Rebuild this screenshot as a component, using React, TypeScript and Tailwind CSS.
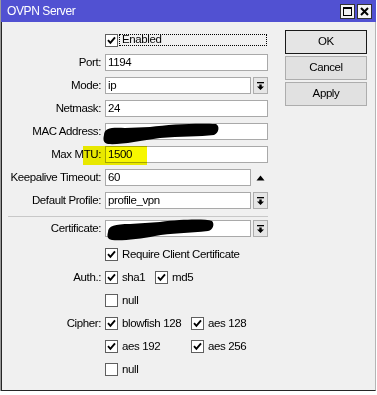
import React from "react";

const font = { fontFamily: "'Liberation Sans', Arial, sans-serif", letterSpacing: "-0.4px" };

function Check() {
  return (
    <svg width="9" height="9" viewBox="0 0 9 9">
      <path d="M1 4.2 L3.4 6.8 L8 1.4" fill="none" stroke="#000" strokeWidth="1.9" />
    </svg>
  );
}

function Checkbox({ checked }: { checked: boolean }) {
  return (
    <div className="w-[13px] h-[13px] border border-[#5f5f5f] bg-white flex items-center justify-center shrink-0">
      {checked && <Check />}
    </div>
  );
}

function CheckItem({ checked, label, w }: { checked: boolean; label: string; w?: string }) {
  return (
    <div className={"flex items-center gap-[4px] " + (w ?? "")}>
      <Checkbox checked={checked} />
      <span className="text-[11.5px] text-black leading-none">{label}</span>
    </div>
  );
}

function DropIcon() {
  return (
    <svg width="9" height="10" viewBox="0 0 9 10">
      <rect x="1" y="1" width="7" height="1.3" fill="#000" />
      <path d="M3.3 3.5 H5.7 V5.5 H8 L4.5 9 L1 5.5 H3.3 Z" fill="#000" />
    </svg>
  );
}

function Field({ value, drop, up }: { value: string; drop?: boolean; up?: boolean }) {
  return (
    <div className="flex items-center w-[163px] gap-[2px]">
      <div
        className={
          "h-[17px] bg-white border border-[#a9a9a9] flex items-center pl-[2px] text-[11.5px] text-black leading-none " +
          (drop || up ? "w-[147px]" : "w-[163px]")
        }
      >
        {value}
      </div>
      {drop && (
        <div className="w-[15px] h-[17px] border border-[#adadad] bg-[#e6e6e6] flex items-center justify-center">
          <DropIcon />
        </div>
      )}
      {up && (
        <div className="w-[15px] h-[17px] flex items-center justify-center">
          <svg width="9" height="6" viewBox="0 0 9 6">
            <path d="M0.5 5.5 L4.5 0.5 L8.5 5.5 Z" fill="#000" />
          </svg>
        </div>
      )}
    </div>
  );
}

function Row({ label, children, h = "h-[23px]" }: { label: string; children: React.ReactNode; h?: string }) {
  return (
    <div className={"flex items-center gap-[4px] " + h}>
      <div className="w-[99px] text-right text-[11.5px] text-black leading-none whitespace-nowrap">{label}</div>
      {children}
    </div>
  );
}

function Btn({ label, def }: { label: string; def?: boolean }) {
  return (
    <div
      className={
        "h-[24px] w-[82px] flex items-center justify-center text-[11.5px] text-black " +
        (def ? "border border-[#1a1a1a] bg-[#e5e5e5]" : "border border-[#adadad] bg-[#e1e1e1]")
      }
    >
      {label}
    </div>
  );
}

export default function App() {
  return (
    <div className="w-[377px] h-[395px] bg-white relative overflow-hidden" style={font}>
      <div className="w-[376px] h-[391px] flex flex-col border-l border-[#9a9a9a]">
        {/* title bar */}
        <div className="h-[22px] bg-[#5151d2] flex items-center justify-between pl-[6px] pr-[4px] shrink-0">
          <span className="text-white text-[12px] leading-none">OVPN Server</span>
          <div className="flex gap-[2px]">
            <div className="w-[15px] h-[15px] bg-[#f4f4f4] border border-[#333] flex items-center justify-center">
              <svg width="9" height="9" viewBox="0 0 9 9">
                <rect x="0.5" y="0.5" width="8" height="8" fill="none" stroke="#000" strokeWidth="1" />
                <rect x="0" y="0" width="9" height="2" fill="#000" />
              </svg>
            </div>
            <div className="w-[15px] h-[15px] bg-[#f4f4f4] border border-[#333] flex items-center justify-center">
              <svg width="9" height="9" viewBox="0 0 9 9">
                <path d="M1 1 L8 8 M8 1 L1 8" stroke="#000" strokeWidth="2" />
              </svg>
            </div>
          </div>
        </div>
        {/* body */}
        <div className="flex-1 bg-[#f0f0f0] border-l border-b border-r border-l-[#262626] border-b-[#262626] border-r-[#b5b5b5] flex relative">
          <div className="w-[266px] pt-[7px] flex flex-col">
            <div className="flex items-center h-[22px] pl-[103px]">
              <Checkbox checked />
              <div className="ml-[1px] h-[12px] w-[148px] border border-dotted border-black flex items-center pl-[2px] text-[11.5px] leading-none">
                Enabled
              </div>
            </div>
            <Row label="Port:"><Field value="1194" /></Row>
            <Row label="Mode:"><Field value="ip" drop /></Row>
            <Row label="Netmask:"><Field value="24" /></Row>
            <Row label="MAC Address:"><Field value="" /></Row>
            <Row label="Max MTU:"><Field value="1500" /></Row>
            <Row label="Keepalive Timeout:"><Field value="60" up /></Row>
            <Row label="Default Profile:"><Field value="profile_vpn" drop /></Row>
            <div className="mt-[4px] ml-[6px] h-[1px] w-[260px] bg-[#c8c8c8]" />
            <Row label="Certificate:"><Field value="" drop /></Row>
            <div className="flex items-center h-[23px] mt-[3px] pl-[103px]">
              <CheckItem checked label="Require Client Certificate" />
            </div>
            <Row label="Auth.:">
              <div className="flex items-center">
                <CheckItem checked label="sha1" w="w-[50px]" />
                <CheckItem checked label="md5" />
              </div>
            </Row>
            <Row label="">
              <CheckItem checked={false} label="null" />
            </Row>
            <Row label="Cipher:">
              <div className="flex items-center">
                <CheckItem checked label="blowfish 128" w="w-[86px]" />
                <CheckItem checked label="aes 128" />
              </div>
            </Row>
            <Row label="">
              <div className="flex items-center">
                <CheckItem checked label="aes 192" w="w-[86px]" />
                <CheckItem checked label="aes 256" />
              </div>
            </Row>
            <Row label="">
              <CheckItem checked={false} label="null" />
            </Row>
          </div>
          <div className="ml-[17px] pt-[8px] flex flex-col gap-[2px]">
            <Btn label="OK" def />
            <Btn label="Cancel" />
            <Btn label="Apply" />
          </div>
        </div>
      </div>
      {/* redaction scribbles */}
      <svg className="absolute left-0 top-0 pointer-events-none" width="377" height="395">
        <path
          d="M104 135 C104 128 112 127 125 128 L150 127 C170 124 200 123 216 124 C220 126 219 133 214 135 C200 137 180 136 160 138 C140 141 120 145 108 144 C103 143 103 139 104 135 Z"
          fill="#000"
        />
        <path
          d="M108 232 C108 226 115 224 130 224 L160 222 C185 219 205 219 212 221 C215 224 213 230 208 231 C190 233 170 233 155 236 C140 239 122 241 112 240 C107 239 107 236 108 232 Z"
          fill="#000"
        />
      </svg>
      {/* highlighter */}
      <div className="absolute left-[83px] top-[146px] w-[64px] h-[19px] bg-[#f7f700] mix-blend-multiply" />
    </div>
  );
}
